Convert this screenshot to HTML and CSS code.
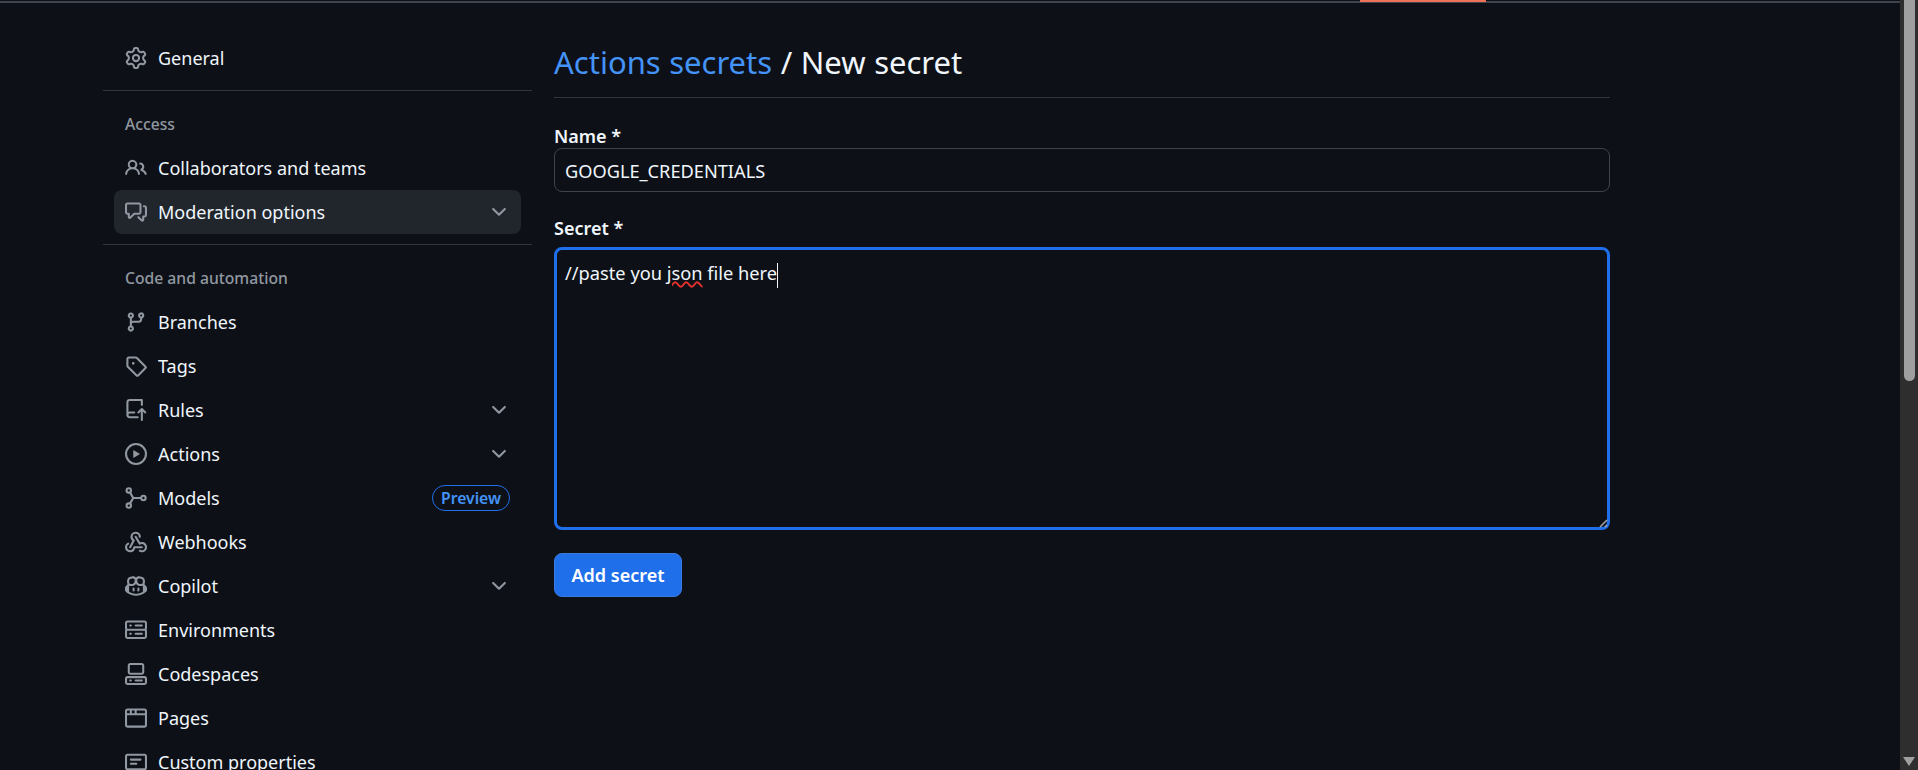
FILE: index.html
```html
<!DOCTYPE html>
<html lang="en">
<head>
  <meta charset="UTF-8" />
  <meta name="viewport" content="width=device-width, initial-scale=1" />
  <title>Actions secrets / New secret</title>
  <link rel="stylesheet" href="styles.css">
</head>
<body>

  <div class="page">
    <div class="top-line"><div class="top-accent"></div></div>

    <div class="layout">
      <nav class="sidebar">
        <a class="nav-item">
          <svg class="icon" viewBox="0 0 16 16"><path d="M8 0a8.2 8.2 0 0 1 .701.031C9.444.095 9.99.645 10.16 1.29l.288 1.107c.018.066.079.158.212.224.231.114.454.243.668.386.123.082.233.09.299.071l1.103-.303c.644-.176 1.392.021 1.82.63.27.385.506.792.704 1.218.315.675.111 1.422-.364 1.891l-.814.806c-.049.048-.098.147-.088.294.016.257.016.515 0 .772-.01.147.038.246.088.294l.814.806c.475.469.679 1.216.364 1.891a7.977 7.977 0 0 1-.704 1.217c-.428.61-1.176.807-1.82.63l-1.102-.302c-.067-.019-.177-.011-.3.071a5.909 5.909 0 0 1-.668.386c-.133.066-.194.158-.211.224l-.29 1.106c-.168.646-.715 1.196-1.458 1.26a8.006 8.006 0 0 1-1.402 0c-.743-.064-1.289-.614-1.458-1.26l-.289-1.106c-.018-.066-.079-.158-.212-.224a5.738 5.738 0 0 1-.668-.386c-.123-.082-.233-.09-.299-.071l-1.103.303c-.644.176-1.392-.021-1.82-.63a8.12 8.12 0 0 1-.704-1.218c-.315-.675-.111-1.422.363-1.891l.815-.806c.05-.048.098-.147.088-.294a6.214 6.214 0 0 1 0-.772c.01-.147-.038-.246-.088-.294l-.815-.806C.635 6.045.431 5.298.746 4.623a7.92 7.92 0 0 1 .704-1.217c.428-.61 1.176-.807 1.82-.63l1.102.302c.067.019.177.011.3-.071.214-.143.437-.272.668-.386.133-.066.194-.158.211-.224l.29-1.106C6.009.645 6.556.095 7.299.03 7.53.01 7.764 0 8 0Zm-.571 1.525c-.036.003-.108.036-.137.146l-.289 1.105c-.147.561-.549.967-.998 1.189-.173.086-.34.183-.5.29-.417.278-.97.423-1.529.27l-1.103-.303c-.109-.03-.175.016-.195.045-.22.312-.412.644-.573.99-.014.031-.021.11.059.19l.815.806c.411.406.562.957.53 1.456a4.709 4.709 0 0 0 0 .582c.032.499-.119 1.05-.53 1.456l-.815.806c-.081.08-.073.159-.059.19.162.346.353.677.573.989.02.03.085.076.195.046l1.102-.303c.56-.153 1.113-.008 1.53.27.161.107.328.204.501.29.447.222.85.629.997 1.189l.289 1.105c.029.109.101.143.137.146a6.6 6.6 0 0 0 1.142 0c.036-.003.108-.036.137-.146l.289-1.105c.147-.561.549-.967.998-1.189.173-.086.34-.183.5-.29.417-.278.97-.423 1.529-.27l1.103.303c.109.029.175-.016.195-.045.22-.313.411-.644.573-.99.014-.031.021-.11-.059-.19l-.815-.806c-.411-.406-.562-.957-.53-1.456a4.709 4.709 0 0 0 0-.582c-.032-.499.119-1.05.53-1.456l.815-.806c.081-.08.073-.159.059-.19a6.464 6.464 0 0 0-.573-.989c-.02-.03-.085-.076-.195-.046l-1.102.303c-.56.153-1.113.008-1.53-.27a4.44 4.44 0 0 0-.501-.29c-.447-.222-.85-.629-.997-1.189l-.289-1.105c-.029-.11-.101-.143-.137-.146a6.6 6.6 0 0 0-1.142 0ZM11 8a3 3 0 1 1-6 0 3 3 0 0 1 6 0ZM9.5 8a1.5 1.5 0 1 0-3.001.001A1.5 1.5 0 0 0 9.5 8Z"/></svg>
          <span class="nav-text">General</span>
        </a>

        <div class="nav-divider"></div>
        <div class="nav-heading">Access</div>

        <a class="nav-item">
          <svg class="icon" viewBox="0 0 16 16"><path d="M2 5.5a3.5 3.5 0 1 1 5.898 2.549 5.508 5.508 0 0 1 3.034 4.084.75.75 0 1 1-1.482.235 4 4 0 0 0-7.9 0 .75.75 0 0 1-1.482-.236A5.507 5.507 0 0 1 3.102 8.05 3.493 3.493 0 0 1 2 5.5ZM11 4a3.001 3.001 0 0 1 2.22 5.018 5.01 5.01 0 0 1 2.56 3.012.749.749 0 0 1-.885.954.752.752 0 0 1-.549-.514 3.507 3.507 0 0 0-2.522-2.372.75.75 0 0 1-.574-.73v-.352a.75.75 0 0 1 .416-.672A1.5 1.5 0 0 0 11 5.5.75.75 0 0 1 11 4Zm-5.5-.5a2 2 0 1 0-.001 3.999A2 2 0 0 0 5.5 3.5Z"/></svg>
          <span class="nav-text">Collaborators and teams</span>
        </a>
        <a class="nav-item active">
          <svg class="icon" viewBox="0 0 16 16"><path d="M1.75 1h8.5c.966 0 1.75.784 1.75 1.75v5.5A1.75 1.75 0 0 1 10.25 10H7.061l-2.574 2.573A1.458 1.458 0 0 1 2 11.543V10h-.25A1.75 1.75 0 0 1 0 8.25v-5.5C0 1.784.784 1 1.75 1ZM1.5 2.75v5.5c0 .138.112.25.25.25h1a.75.75 0 0 1 .75.75v2.19l2.72-2.72a.749.749 0 0 1 .53-.22h3.5a.25.25 0 0 0 .25-.25v-5.5a.25.25 0 0 0-.25-.25h-8.5a.25.25 0 0 0-.25.25Zm13 2a.25.25 0 0 0-.25-.25h-.5a.75.75 0 0 1 0-1.5h.5c.966 0 1.75.784 1.75 1.75v5.5A1.75 1.75 0 0 1 14.25 12H14v1.543a1.458 1.458 0 0 1-2.487 1.03L9.22 12.28a.749.749 0 0 1 .326-1.275.749.749 0 0 1 .734.215l2.22 2.22v-2.19a.75.75 0 0 1 .75-.75h1a.25.25 0 0 0 .25-.25Z"/></svg>
          <span class="nav-text">Moderation options</span>
          <svg class="chevron" viewBox="0 0 16 16"><path d="M12.78 5.22a.749.749 0 0 1 0 1.06l-4.25 4.25a.749.749 0 0 1-1.06 0L3.22 6.28a.749.749 0 1 1 1.06-1.06L8 8.939l3.72-3.719a.749.749 0 0 1 1.06 0Z"/></svg>
        </a>

        <div class="nav-divider"></div>
        <div class="nav-heading">Code and automation</div>

        <a class="nav-item">
          <svg class="icon" viewBox="0 0 16 16"><path d="M9.5 3.25a2.25 2.25 0 1 1 3 2.122V6A2.5 2.5 0 0 1 10 8.5H6a1 1 0 0 0-1 1v1.128a2.251 2.251 0 1 1-1.5 0V5.372a2.25 2.25 0 1 1 1.5 0v1.836A2.493 2.493 0 0 1 6 7h4a1 1 0 0 0 1-1v-.628A2.25 2.25 0 0 1 9.5 3.25Zm-6 0a.75.75 0 1 0 1.5 0 .75.75 0 0 0-1.5 0Zm8.25-.75a.75.75 0 1 0 0 1.5.75.75 0 0 0 0-1.5ZM4.25 12a.75.75 0 1 0 0 1.5.75.75 0 0 0 0-1.5Z"/></svg>
          <span class="nav-text">Branches</span>
        </a>
        <a class="nav-item">
          <svg class="icon" viewBox="0 0 16 16"><path d="M1 7.775V2.75C1 1.784 1.784 1 2.75 1h5.025c.464 0 .91.184 1.238.513l6.25 6.25a1.75 1.75 0 0 1 0 2.474l-5.026 5.026a1.75 1.75 0 0 1-2.474 0l-6.25-6.25A1.752 1.752 0 0 1 1 7.775Zm1.5 0c0 .066.026.13.073.177l6.25 6.25a.25.25 0 0 0 .354 0l5.025-5.025a.25.25 0 0 0 0-.354l-6.25-6.25a.25.25 0 0 0-.177-.073H2.75a.25.25 0 0 0-.25.25ZM6 5a1 1 0 1 1 0 2 1 1 0 0 1 0-2Z"/></svg>
          <span class="nav-text">Tags</span>
        </a>
        <a class="nav-item">
          <svg class="icon" viewBox="0 0 16 16"><path d="M1 2.5A2.5 2.5 0 0 1 3.5 0h8.75a.75.75 0 0 1 .75.75v3.5a.75.75 0 0 1-1.5 0V1.5h-8a1 1 0 0 0-1 1v6.708A2.493 2.493 0 0 1 3.5 9h3.25a.75.75 0 0 1 0 1.5H3.5a1 1 0 0 0 0 2h5.75a.75.75 0 0 1 0 1.5H3.5A2.5 2.5 0 0 1 1 11.5Zm13.23 7.79h-.001l-1.224-1.224v6.184a.75.75 0 0 1-1.5 0V9.066L10.28 10.29a.75.75 0 0 1-1.06-1.061l2.505-2.504a.75.75 0 0 1 1.06 0L15.29 9.23a.751.751 0 0 1-.018 1.042.751.751 0 0 1-1.042.018Z"/></svg>
          <span class="nav-text">Rules</span>
          <svg class="chevron" viewBox="0 0 16 16"><path d="M12.78 5.22a.749.749 0 0 1 0 1.06l-4.25 4.25a.749.749 0 0 1-1.06 0L3.22 6.28a.749.749 0 1 1 1.06-1.06L8 8.939l3.72-3.719a.749.749 0 0 1 1.06 0Z"/></svg>
        </a>
        <a class="nav-item">
          <svg class="icon" viewBox="0 0 16 16"><path d="M8 0a8 8 0 1 1 0 16A8 8 0 0 1 8 0ZM1.5 8a6.5 6.5 0 1 0 13 0 6.5 6.5 0 0 0-13 0Zm4.879-2.773 4.264 2.559a.25.25 0 0 1 0 .428l-4.264 2.559A.25.25 0 0 1 6 10.559V5.442a.25.25 0 0 1 .379-.215Z"/></svg>
          <span class="nav-text">Actions</span>
          <svg class="chevron" viewBox="0 0 16 16"><path d="M12.78 5.22a.749.749 0 0 1 0 1.06l-4.25 4.25a.749.749 0 0 1-1.06 0L3.22 6.28a.749.749 0 1 1 1.06-1.06L8 8.939l3.72-3.719a.749.749 0 0 1 1.06 0Z"/></svg>
        </a>
        <a class="nav-item">
          <svg class="icon icon-stroke" viewBox="0 0 16 16"><circle cx="2.75" cy="2.5" r="1.6"/><circle cx="2.75" cy="13.5" r="1.6"/><circle cx="13.4" cy="8" r="1.6"/><path d="M3.6 3.9 6 8l-2.4 4.1M6 8h5.8"/></svg>
          <span class="nav-text">Models</span>
          <span class="badge">Preview</span>
        </a>
        <a class="nav-item">
          <svg class="icon" viewBox="0 0 16 16"><path d="M5.5 4.25a2.25 2.25 0 0 1 4.5 0 .75.75 0 0 0 1.5 0 3.75 3.75 0 1 0-6.14 2.889l-2.272 4.258a.75.75 0 0 0 1.324.706L7 7.25a.75.75 0 0 0-.309-1.015A2.25 2.25 0 0 1 5.5 4.25Z"/><path d="M7.364 3.607a.75.75 0 0 1 1.03.257l2.608 4.349a3.75 3.75 0 1 1-.628 6.785.75.75 0 0 1 .752-1.299 2.25 2.25 0 1 0-.033-3.88.75.75 0 0 1-1.03-.256L7.107 4.636a.75.75 0 0 1 .257-1.03Z"/><path d="M2.9 8.776A.75.75 0 0 1 2.625 9.8 2.25 2.25 0 1 0 6 11.75a.75.75 0 0 1 .75-.75h5.5a.75.75 0 0 1 0 1.5H7.425a3.751 3.751 0 1 1-5.55-3.998.75.75 0 0 1 1.024.274Z"/></svg>
          <span class="nav-text">Webhooks</span>
        </a>
        <a class="nav-item">
          <svg class="icon" viewBox="0 0 16 16"><path d="M7.998 15.035c-4.562 0-7.873-2.914-7.998-3.749V9.338c.085-.628.677-1.686 1.588-2.065.013-.07.024-.143.036-.218.029-.183.06-.384.126-.612-.201-.508-.254-1.084-.254-1.656 0-.87.128-1.769.693-2.484.579-.733 1.494-1.124 2.724-1.261 1.206-.134 2.262.034 2.944.765.05.053.096.108.139.165.044-.057.094-.112.143-.165.682-.731 1.738-.899 2.944-.765 1.23.137 2.145.528 2.724 1.261.566.715.693 1.614.693 2.484 0 .572-.053 1.148-.254 1.656.066.228.098.429.126.612.012.076.024.148.037.218.924.385 1.522 1.471 1.591 2.095v1.872c0 .766-3.351 3.795-8.002 3.795Zm0-1.485c2.28 0 4.584-1.11 5.002-1.433V7.862l-.023-.116c-.49.21-1.075.291-1.727.291-1.146 0-2.059-.327-2.71-.991A3.222 3.222 0 0 1 8 6.303a3.24 3.24 0 0 1-.544.743c-.65.664-1.563.991-2.71.991-.652 0-1.236-.081-1.727-.291l-.023.116v4.255c.419.323 2.722 1.433 5.002 1.433ZM6.762 2.83c-.193-.206-.637-.413-1.682-.297-1.019.113-1.479.404-1.713.7-.247.312-.369.789-.369 1.554 0 .793.129 1.171.308 1.371.162.181.519.379 1.442.379.853 0 1.339-.235 1.638-.54.315-.322.527-.827.617-1.553.117-.935-.037-1.395-.241-1.614Zm4.155-.297c-1.044-.116-1.488.091-1.681.297-.204.219-.359.679-.242 1.614.091.726.303 1.231.618 1.553.299.305.784.54 1.638.54.922 0 1.28-.198 1.442-.379.179-.2.308-.578.308-1.371 0-.765-.123-1.242-.37-1.554-.233-.296-.693-.587-1.713-.7Z"/><path d="M6.25 9.037a.75.75 0 0 1 .75.75v1.501a.75.75 0 0 1-1.5 0V9.787a.75.75 0 0 1 .75-.75Zm4.25.75v1.501a.75.75 0 0 1-1.5 0V9.787a.75.75 0 0 1 1.5 0Z"/></svg>
          <span class="nav-text">Copilot</span>
          <svg class="chevron" viewBox="0 0 16 16"><path d="M12.78 5.22a.749.749 0 0 1 0 1.06l-4.25 4.25a.749.749 0 0 1-1.06 0L3.22 6.28a.749.749 0 1 1 1.06-1.06L8 8.939l3.72-3.719a.749.749 0 0 1 1.06 0Z"/></svg>
        </a>
        <a class="nav-item">
          <svg class="icon" viewBox="0 0 16 16"><path d="M1.75 1h12.5c.966 0 1.75.784 1.75 1.75v4c0 .372-.116.717-.314 1 .198.283.314.628.314 1v4a1.75 1.75 0 0 1-1.75 1.75H1.75A1.75 1.75 0 0 1 0 12.75v-4c0-.358.109-.707.314-1a1.739 1.739 0 0 1-.314-1v-4C0 1.784.784 1 1.75 1ZM1.5 2.75v4c0 .138.112.25.25.25h12.5a.25.25 0 0 0 .25-.25v-4a.25.25 0 0 0-.25-.25H1.75a.25.25 0 0 0-.25.25Zm.25 5.75a.25.25 0 0 0-.25.25v4c0 .138.112.25.25.25h12.5a.25.25 0 0 0 .25-.25v-4a.25.25 0 0 0-.25-.25ZM7 4.75A.75.75 0 0 1 7.75 4h4.5a.75.75 0 0 1 0 1.5h-4.5A.75.75 0 0 1 7 4.75ZM7.75 10h4.5a.75.75 0 0 1 0 1.5h-4.5a.75.75 0 0 1 0-1.5ZM3 4.75A.75.75 0 0 1 3.75 4h.5a.75.75 0 0 1 0 1.5h-.5A.75.75 0 0 1 3 4.75ZM3.75 10h.5a.75.75 0 0 1 0 1.5h-.5a.75.75 0 0 1 0-1.5Z"/></svg>
          <span class="nav-text">Environments</span>
        </a>
        <a class="nav-item">
          <svg class="icon" viewBox="0 0 16 16"><path d="M0 11.25c0-.966.784-1.75 1.75-1.75h12.5c.966 0 1.75.784 1.75 1.75v3A1.75 1.75 0 0 1 14.25 16H1.75A1.75 1.75 0 0 1 0 14.25Zm2-9.5C2 .784 2.784 0 3.75 0h8.5C13.216 0 14 .784 14 1.75v5a1.75 1.75 0 0 1-1.75 1.75h-8.5A1.75 1.75 0 0 1 2 6.75Zm1.75-.25a.25.25 0 0 0-.25.25v5c0 .138.112.25.25.25h8.5a.25.25 0 0 0 .25-.25v-5a.25.25 0 0 0-.25-.25Zm-2 9.5a.25.25 0 0 0-.25.25v3c0 .138.112.25.25.25h12.5a.25.25 0 0 0 .25-.25v-3a.25.25 0 0 0-.25-.25Z"/><path d="M7 12.75a.75.75 0 0 1 .75-.75h4.5a.75.75 0 0 1 0 1.5h-4.5a.75.75 0 0 1-.75-.75Zm-4 0a.75.75 0 0 1 .75-.75h.5a.75.75 0 0 1 0 1.5h-.5a.75.75 0 0 1-.75-.75Z"/></svg>
          <span class="nav-text">Codespaces</span>
        </a>
        <a class="nav-item">
          <svg class="icon" viewBox="0 0 16 16"><path d="M0 2.75C0 1.784.784 1 1.75 1h12.5c.966 0 1.75.784 1.75 1.75v10.5A1.75 1.75 0 0 1 14.25 15H1.75A1.75 1.75 0 0 1 0 13.25ZM14.5 6h-13v7.25c0 .138.112.25.25.25h12.5a.25.25 0 0 0 .25-.25Zm-6-3.5v2h6V2.75a.25.25 0 0 0-.25-.25ZM5 2.5v2h2v-2Zm-3.25 0a.25.25 0 0 0-.25.25V4.5h2v-2Z"/></svg>
          <span class="nav-text">Pages</span>
        </a>
        <a class="nav-item">
          <svg class="icon" viewBox="0 0 16 16"><path d="M0 3.75C0 2.784.784 2 1.75 2h12.5c.966 0 1.75.784 1.75 1.75v8.5A1.75 1.75 0 0 1 14.25 14H1.75A1.75 1.75 0 0 1 0 12.25Zm1.75-.25a.25.25 0 0 0-.25.25v8.5c0 .138.112.25.25.25h12.5a.25.25 0 0 0 .25-.25v-8.5a.25.25 0 0 0-.25-.25ZM3.5 6.25a.75.75 0 0 1 .75-.75h7a.75.75 0 0 1 0 1.5h-7a.75.75 0 0 1-.75-.75Zm.75 2.25h4a.75.75 0 0 1 0 1.5h-4a.75.75 0 0 1 0-1.5Z"/></svg>
          <span class="nav-text">Custom properties</span>
        </a>
      </nav>

      <main class="content">
        <h1 class="page-title"><a class="title-link">Actions secrets</a> / New secret</h1>

        <div class="field-label">Name *</div>
        <div class="text-input">GOOGLE_CREDENTIALS</div>

        <div class="field-label secret-label">Secret *</div>
        <div class="secret-box">
          <span>//paste you <span class="misspelled">json</span> file here</span><span class="caret"></span>
          <svg class="resize-grip" viewBox="0 0 10 10"><path d="M9 2 2 9M9 7 7 9"/></svg>
        </div>

        <button class="submit-btn">Add secret</button>
      </main>

      <div class="scrollbar">
        <div class="scroll-thumb"></div>
        <div class="scroll-arrow"></div>
      </div>
    </div>
  </div>

</body>
</html>
```

FILE: styles.css
```css
* {
  box-sizing: border-box;
}

body {
  margin: 0;
  background: #0d1117;
  color: #f0f6fc;
  font-family: 'Noto Sans', 'Open Sans', sans-serif;
}

.page {
  height: 770px;
  overflow: hidden;
  display: flex;
  flex-direction: column;
}

.top-line {
  height: 3px;
  padding-top: 1px;
  flex-shrink: 0;
  margin-right: 18px;
  background: #0d1117;
  position: relative;
}

.top-line::before {
  content: "";
  display: block;
  height: 2px;
  background: #3d444d;
}

.top-accent {
  position: absolute;
  top: 0;
  left: 1360px;
  width: 126px;
  height: 2px;
  background: #f0715a;
}

.layout {
  flex: 1;
  min-height: 0;
  display: flex;
}

/* sidebar */
.sidebar {
  width: 429px;
  margin-left: 103px;
  padding-top: 33px;
  flex-shrink: 0;
}

.nav-item {
  display: flex;
  align-items: center;
  height: 44px;
  margin: 0 11px;
  padding: 0 11px;
  border-radius: 8px;
  font-size: 18px;
  color: #f0f6fc;
}

.nav-item.active {
  background: #21262d;
}

.icon {
  width: 22px;
  height: 22px;
  margin-right: 11px;
  flex-shrink: 0;
  fill: #9198a1;
}

.icon-stroke {
  fill: none;
  stroke: #9198a1;
  stroke-width: 1.5;
}

.nav-text {
  flex: 1;
}

.chevron {
  width: 22px;
  height: 22px;
  flex-shrink: 0;
  fill: #9198a1;
}

.nav-divider {
  height: 1px;
  margin: 10px 0 11px;
  background: #30363d;
}

.nav-heading {
  height: 44px;
  padding: 11px 22px 0;
  font-size: 15.7px;
  font-weight: 500;
  color: #9198a1;
}

.badge {
  padding: 0 8px;
  border: 1px solid #1f6feb;
  border-radius: 14px;
  font-size: 15.7px;
  font-weight: 600;
  line-height: 24px;
  color: #4493f8;
}

/* form */
.content {
  width: 1056px;
  margin-left: 22px;
  flex-shrink: 0;
}

.page-title {
  margin: 0 0 22px;
  padding-top: 35px;
  height: 95px;
  border-bottom: 1px solid #30363d;
  font-size: 31px;
  font-weight: 400;
  line-height: 48px;
  word-spacing: 0.5px;
}

.title-link {
  color: #4493f8;
}

.field-label {
  height: 28px;
  padding-top: 3px;
  font-size: 18px;
  font-weight: 600;
  line-height: 26px;
}

.text-input {
  height: 44px;
  padding: 0 10px;
  border: 1px solid #3d444d;
  border-radius: 8px;
  font-size: 18.2px;
  line-height: 44px;
}

.secret-label {
  margin: 19px 0 8px;
  padding-top: 4px;
}

.secret-box {
  position: relative;
  height: 283px;
  padding: 9px 8px;
  border: 3px solid #1f6feb;
  border-radius: 8px;
  font-size: 18.25px;
  line-height: 28px;
}

.misspelled {
  text-decoration: underline wavy #e5302c 1.5px;
}

.caret {
  display: inline-block;
  width: 1px;
  height: 25px;
  vertical-align: middle;
  background: #f0f6fc;
}

.resize-grip {
  position: absolute;
  right: -1px;
  bottom: -1px;
  width: 10px;
  height: 10px;
  fill: none;
  stroke: #a8a8a8;
  stroke-width: 1.5;
}

.submit-btn {
  display: block;
  width: 128px;
  height: 44px;
  margin-top: 23px;
  padding: 0;
  border: 1px solid #3b7be0;
  border-radius: 8px;
  background: #1f6feb;
  color: #ffffff;
  font-family: inherit;
  font-size: 18px;
  font-weight: 600;
}

/* window scrollbar */
.scrollbar {
  position: fixed;
  top: 0;
  right: 0;
  bottom: 0;
  width: 18px;
  background: #2e2e2e;
}

.scroll-thumb {
  width: 11px;
  height: 381px;
  margin-left: 4px;
  border-radius: 0 0 6px 6px;
  background: #9f9f9f;
}

.scroll-arrow {
  position: absolute;
  bottom: 4px;
  left: 3px;
  width: 0;
  height: 0;
  border-left: 6px solid transparent;
  border-right: 6px solid transparent;
  border-top: 9px solid #9f9f9f;
}
```
